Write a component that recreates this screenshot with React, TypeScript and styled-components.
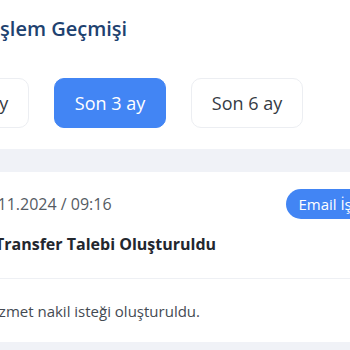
import React from "react";
import styled, { createGlobalStyle } from "styled-components";

const Global = createGlobalStyle`
  html, body { margin: 0; padding: 0; background: #ffffff; overflow: hidden; }
  body { font-family: "Open Sans", "Noto Sans", sans-serif; }
`;

const Page = styled.div`
  margin-left: -16px;
  width: 440px;
`;

const Title = styled.h2`
  margin: 15px 0 0 10px;
  font-size: 20px;
  line-height: 28px;
  font-weight: 600;
  color: #1e4270;
`;

const ChipRow = styled.div`
  display: flex;
  gap: 25px;
  margin: 35px 0 0 -67px;
`;

const Chip = styled.button<{ $active?: boolean }>`
  flex: 0 0 112px;
  height: 50px;
  border-radius: 10px;
  border: 1px solid ${(p) => (p.$active ? "#4285f4" : "#eceef2")};
  background: ${(p) => (p.$active ? "#4285f4" : "#ffffff")};
  color: ${(p) => (p.$active ? "#ffffff" : "#363b44")};
  font-family: inherit;
  font-size: 18px;
  padding: 0;
`;

const Band = styled.div<{ $h: number }>`
  height: ${(p) => p.$h}px;
  background: #f0f2f7;
`;

const Card = styled.div`
  margin-top: 21px;
`;

const MetaRow = styled.div`
  display: flex;
  align-items: center;
  justify-content: space-between;
  padding-top: 17px;
  height: 30px;
`;

const DateText = styled.span`
  margin-left: -9px;
  font-size: 16px;
  color: #555b63;
`;

const Pill = styled.span`
  display: inline-flex;
  align-items: center;
  height: 30px;
  padding: 0 12px;
  border-radius: 15px;
  background: #4285f4;
  color: #ffffff;
  font-size: 15px;
  white-space: nowrap;
  margin-right: 12px;
`;

const EntryTitle = styled.div`
  margin-top: 14px;
  padding-left: 11px;
  font-size: 16px;
  font-weight: 700;
  color: #23272e;
  padding-bottom: 23px;
  border-bottom: 1px solid #eef0f4;
`;

const Desc = styled.div`
  padding: 22px 0 21px 0;
  font-size: 15px;
  color: #444a52;
`;

export default function App() {
  return (
    <>
      <Global />
      <Page>
        <Title>İşlem Geçmişi</Title>
        <ChipRow>
          <Chip>Son 1 ay</Chip>
          <Chip $active>Son 3 ay</Chip>
          <Chip>Son 6 ay</Chip>
        </ChipRow>
        <Card>
          <Band $h={23} />
          <MetaRow>
            <DateText>14.11.2024 / 09:16</DateText>
            <Pill>Email İşlemleri</Pill>
          </MetaRow>
          <EntryTitle>Transfer Talebi Oluşturuldu</EntryTitle>
          <Desc>Hizmet nakil isteği oluşturuldu.</Desc>
          <Band $h={20} />
        </Card>
      </Page>
    </>
  );
}
